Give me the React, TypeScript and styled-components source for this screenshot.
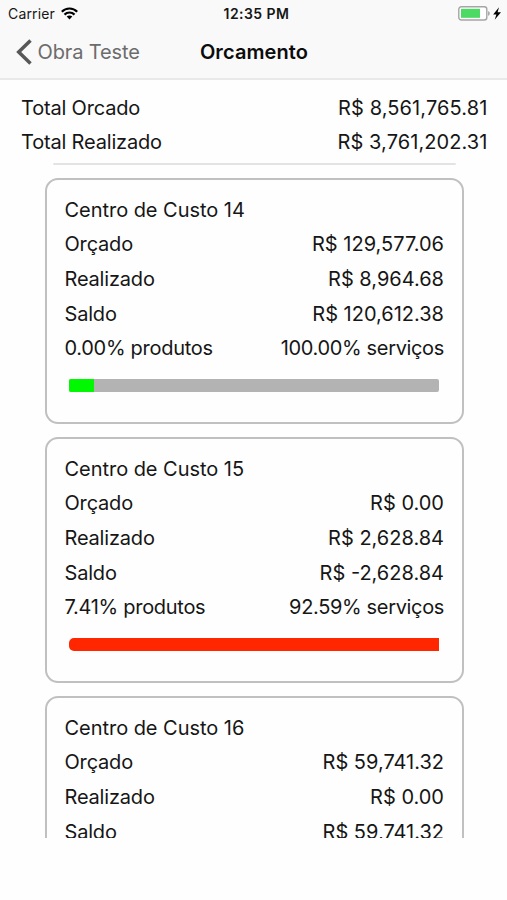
import React from "react";
import styled, { createGlobalStyle } from "styled-components";

const GlobalStyle = createGlobalStyle`
  * { box-sizing: border-box; }
  body {
    margin: 0;
    background: #fff;
    color: #161616;
    font-family: Inter, "Liberation Sans", sans-serif;
  }
`;

const Screen = styled.div`
  width: 507px;
  height: 900px;
  overflow: hidden;
  display: flex;
  flex-direction: column;
  background: #fefefe;
`;

const Header = styled.header`
  height: 80px;
  flex: none;
  background: #f9f9f9;
  border-bottom: 2px solid #e9e9e9;
`;

const StatusBar = styled.div`
  height: 27px;
  display: grid;
  grid-template-columns: 1fr auto 1fr;
  align-items: center;
  padding: 0 5px 0 8px;
  font-size: 14px;
`;

const Carrier = styled.div`
  display: flex;
  align-items: center;
  gap: 6px;
  letter-spacing: 0.15px;
`;

const Clock = styled.div`
  font-size: 14px;
  font-weight: 600;
  letter-spacing: 0.45px;
  padding-left: 3px;
`;

const Power = styled.div`
  display: flex;
  justify-content: flex-end;
`;

const NavBar = styled.nav`
  height: 50px;
  display: grid;
  grid-template-columns: 1fr auto 1fr;
  align-items: center;
  padding: 0 15px 0 16px;
`;

const BackButton = styled.button`
  display: flex;
  align-items: center;
  gap: 4.5px;
  padding: 0;
  border: 0;
  background: none;
  color: #6c6c6c;
  font: inherit;
  font-size: 20px;
  letter-spacing: -0.12px;
  white-space: nowrap;
`;

const Title = styled.h1`
  margin: 0;
  font-size: 20px;
  font-weight: 600;
  letter-spacing: 0.1px;
  color: #0c0c0c;
`;

const Text = styled.span<{ $spacing: number }>`
  letter-spacing: ${(p) => p.$spacing}px;
`;

const Row = styled.div`
  height: 34.7px;
  display: flex;
  align-items: center;
  justify-content: space-between;
  font-size: 20px;
  line-height: 34.7px;
  white-space: nowrap;
`;

const Totals = styled.section`
  flex: none;
  height: 83px;
  padding: 10.6px 19.5px 0 21px;
`;

const CardList = styled.main`
  height: 674.5px;
  flex: none;
  overflow: hidden;
  padding: 0 43.5px 0 44.5px;
`;

const PreviousEdge = styled.div`
  height: 2px;
  margin: 0 8px 12.5px;
  background: #e3e3e3;
  border-radius: 1px;
`;

const Card = styled.article`
  height: 246px;
  margin-bottom: 13px;
  padding: 13.2px 17.5px 0 18px;
  border: 2px solid #c0c0c0;
  border-radius: 13px;
`;

const Track = styled.div<{ $round?: boolean }>`
  height: 12.5px;
  margin: 13px 5px 0 4px;
  overflow: hidden;
  border-radius: ${(p) => (p.$round ? "5px 0 0 5px" : "2px")};
  background: #b3b3b3;
`;

const Fill = styled.div<{ $color: string }>`
  height: 100%;
  background: ${(p) => p.$color};
`;

type Center = {
  name: string;
  budget: string;
  spent: string;
  balance: string;
  split?: { products: string; services: string };
  progress?: number;
  over?: boolean;
};

const centers: Center[] = [
  {
    name: "Centro de Custo 14",
    budget: "R$ 129,577.06",
    spent: "R$ 8,964.68",
    balance: "R$ 120,612.38",
    split: { products: "0.00% produtos", services: "100.00% serviços" },
    progress: 7,
  },
  {
    name: "Centro de Custo 15",
    budget: "R$ 0.00",
    spent: "R$ 2,628.84",
    balance: "R$ -2,628.84",
    split: { products: "7.41% produtos", services: "92.59% serviços" },
    progress: 100,
    over: true,
  },
  { name: "Centro de Custo 16", budget: "R$ 59,741.32", spent: "R$ 0.00", balance: "R$ 59,741.32" },
];

const WifiIcon = () => (
  <svg width="17" height="13" viewBox="0 0 17 13" fill="none" stroke="#000" strokeWidth="2.2">
    <path d="M.8 4.7C5 .4 12 .4 16.2 4.7" />
    <path d="M3.5 7.6c2.8-2.8 7.2-2.8 10 0" />
    <path d="M8.5 12.4 5.7 9.6c1.6-1.4 4-1.4 5.6 0z" fill="#000" stroke="none" />
  </svg>
);

const BatteryIcon = () => (
  <svg width="44" height="15" viewBox="0 0 44 15">
    <rect x=".8" y=".8" width="28" height="13.2" rx="2.5" fill="#fff" stroke="#a5a5a5" strokeWidth="1.4" />
    <rect x="3" y="2.8" width="19" height="9" fill="#4cd964" />
    <path d="M30.2 5.2c2 .6 2 3.8 0 4.5z" fill="#999" />
    <path d="m41 1.2-5.8 7.3h3.2l-1.7 5.3 6.3-7.6h-3.4z" fill="#000" />
  </svg>
);

const BackIcon = () => (
  <svg width="17" height="26" viewBox="0 0 17 26" fill="none" stroke="#585858" strokeWidth="3.5">
    <path d="M14.5 1.5 2.7 13l11.8 11.5" />
  </svg>
);

type EntryProps = { label: string; value?: string; labelSpacing?: number; valueSpacing?: number };

const Entry = ({ label, value, labelSpacing = -0.18, valueSpacing = 0 }: EntryProps) => (
  <Row>
    <Text $spacing={labelSpacing}>{label}</Text>
    {value && <Text $spacing={valueSpacing}>{value}</Text>}
  </Row>
);

export default function App() {
  return (
    <>
      <GlobalStyle />
      <Screen>
        <Header>
          <StatusBar>
            <Carrier>Carrier <WifiIcon /></Carrier>
            <Clock>12:35 PM</Clock>
            <Power><BatteryIcon /></Power>
          </StatusBar>
          <NavBar>
            <BackButton><BackIcon />Obra Teste</BackButton>
            <Title>Orcamento</Title>
          </NavBar>
        </Header>
        <Totals>
          <Entry label="Total Orcado" value="R$ 8,561,765.81" valueSpacing={0.12} />
          <Entry label="Total Realizado" value="R$ 3,761,202.31" valueSpacing={0.08} />
        </Totals>
        <CardList>
          <PreviousEdge />
          {centers.map((c) => (
            <Card key={c.name}>
              <Entry label={c.name} labelSpacing={-0.04} />
              <Entry label="Orçado" value={c.budget} />
              <Entry label="Realizado" value={c.spent} />
              <Entry label="Saldo" value={c.balance} />
              {c.split && (
                <>
                  <Entry label={c.split.products} value={c.split.services} labelSpacing={-0.29} valueSpacing={-0.34} />
                  <Track $round={c.over}>
                    <Fill $color={c.over ? "#ff2600" : "#00f900"} style={{ width: `${c.progress}%` }} />
                  </Track>
                </>
              )}
            </Card>
          ))}
        </CardList>
      </Screen>
    </>
  );
}
